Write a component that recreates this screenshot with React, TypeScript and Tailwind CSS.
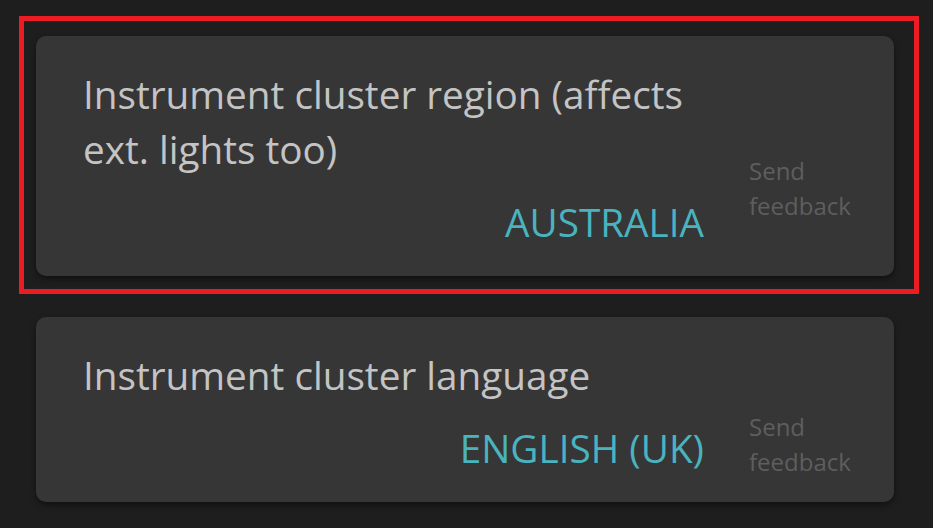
import React from 'react'

type Setting = {
  title: string
  value: string
  feedbackPad: string
}

const settings: Setting[] = [
  { title: 'Instrument cluster region (affects ext. lights too)', value: 'AUSTRALIA', feedbackPad: 'pb-[53px]' },
  { title: 'Instrument cluster language', value: 'ENGLISH (UK)', feedbackPad: 'pb-[23px]' },
]

function SettingCard({ title, value, feedbackPad }: Setting) {
  return (
    <div className="w-[858px] flex rounded-[10px] bg-[#363636] shadow-[0_3px_6px_rgba(0,0,0,0.45)]">
      <div className="w-[668px] pl-[47px] pt-[31px] pb-[26px] flex flex-col">
        <p className="text-[38.7px] leading-[55px] text-[#c4c4c4]">{title}</p>
        <p className="mt-[18px] text-right text-[38.7px] leading-[55px] text-[#49b3bf]">{value}</p>
      </div>
      {/* send feedback link */}
      <div className={`flex-1 pl-[45px] self-end ${feedbackPad}`}>
        <p className="text-[24px] leading-[35px] text-[#5e5e5e]">
          Send
          <br />
          feedback
        </p>
      </div>
    </div>
  )
}

export default function App() {
  return (
    <div
      className="w-[933px] h-[528px] bg-[#1e1e1e] pt-4 overflow-hidden"
      style={{ fontFamily: '"Open Sans", Lato, sans-serif' }}
    >
      {/* highlighted row */}
      <div className="ml-[19px] w-[900px] h-[278px] border-[5px] border-[#ec1c24] pl-[12px] pt-[15px]">
        <SettingCard {...settings[0]} />
      </div>
      <div className="ml-[36px] mt-[23px]">
        <SettingCard {...settings[1]} />
      </div>
    </div>
  )
}
